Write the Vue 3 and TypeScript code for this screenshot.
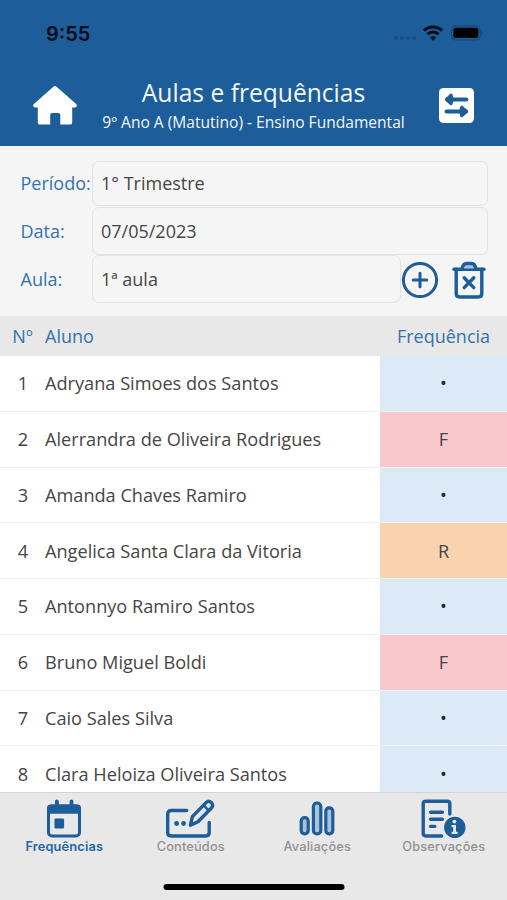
<script setup lang="ts">
type Mark = '•' | 'F' | 'R'

interface Student {
  id: number
  name: string
  mark: Mark
}

const students: Student[] = [
  { id: 1, name: 'Adryana Simoes dos Santos', mark: '•' },
  { id: 2, name: 'Alerrandra de Oliveira Rodrigues', mark: 'F' },
  { id: 3, name: 'Amanda Chaves Ramiro', mark: '•' },
  { id: 4, name: 'Angelica Santa Clara da Vitoria', mark: 'R' },
  { id: 5, name: 'Antonnyo Ramiro Santos', mark: '•' },
  { id: 6, name: 'Bruno Miguel Boldi', mark: 'F' },
  { id: 7, name: 'Caio Sales Silva', mark: '•' },
  { id: 8, name: 'Clara Heloiza Oliveira Santos', mark: '•' },
]

const markClass: Record<Mark, string> = { '•': 'present', F: 'absent', R: 'late' }
</script>

<template>
  <div class="screen">
    <header class="top">
      <div class="status">
        <span class="clock">9:55</span>
        <div class="signals">
          <span class="dots"><i v-for="n in 4" :key="n"></i></span>
          <svg class="wifi" width="20" height="16" viewBox="0 0 20 16">
            <g fill="none" stroke="#050d18" stroke-width="3">
              <path d="M1 5.6a12.9 12.9 0 0 1 18 0" />
              <path d="M4.4 9.3a8 8 0 0 1 11.2 0" />
            </g>
            <path d="M10 15.8l-3-3.2a4.3 4.3 0 0 1 6 0z" fill="#050d18" />
          </svg>
          <svg class="battery" width="32" height="16" viewBox="0 0 32 16">
            <rect x=".6" y=".8" width="28.6" height="14.2" rx="4.3" fill="none" stroke="#164878" stroke-width="1.2" />
            <rect x="2.4" y="2.7" width="25" height="10.4" rx="2.4" fill="#000" />
            <path d="M30.5 5.5q2 2.4 0 4.8z" fill="#123d68" />
          </svg>
        </div>
      </div>
      <div class="nav">
        <svg class="home" width="44" height="39" viewBox="0 0 44 39">
          <path d="M20.4.8a2.4 2.4 0 0 1 3.2 0L43.4 18.3Q44.7 20.9 42.2 21.5H39.2V36.8Q39.2 38.5 37.5 38.5H27.3V29Q27.3 27 25.3 27H19.2Q17.2 27 17.2 29V38.5H6.5Q4.8 38.5 4.8 36.8V21.5H1.8Q-.7 20.9.6 18.3z" fill="#fff" />
        </svg>
        <div class="titles">
          <h1>Aulas e frequências</h1>
          <p>9º Ano A (Matutino) - Ensino Fundamental</p>
        </div>
        <svg class="swap" width="35" height="35" viewBox="0 0 35 35">
          <rect width="35" height="35" rx="4.5" fill="#fff" />
          <g fill="#1d5d99" stroke="#1d5d99" stroke-linecap="round" stroke-linejoin="round">
            <path d="M8 11.4H27.4M7.5 23.5H27" stroke-width="4" fill="none" />
            <path d="M7.8 11.4L12 7.4L13 11.4L12 15.4zM27.4 23.5L22.8 19.4L22 23.5L22.8 27.6z" stroke-width="3.4" />
          </g>
        </svg>
      </div>
    </header>

    <section class="filters">
      <div class="field first"><label>Período:</label><div class="box">1° Trimestre</div></div>
      <div class="field"><label>Data:</label><div class="box">07/05/2023</div></div>
      <div class="field">
        <label>Aula:</label>
        <div class="box short">1ª aula</div>
        <svg class="add" width="38" height="38" viewBox="0 0 38 38" fill="none" stroke="#1d5d99" stroke-width="3" stroke-linecap="round">
          <circle cx="19" cy="19" r="16.6" />
          <path d="M12.2 19H25.8M19 12.2V25.8" />
        </svg>
        <svg class="trash" width="34" height="38" viewBox="0 0 34 38" fill="none" stroke="#1d5d99" stroke-width="3.4" stroke-linecap="round" stroke-linejoin="round">
          <path d="M2 8.2H32" />
          <path d="M4.2 8.2V32.5Q4.2 36 7.7 36H26.3Q29.8 36 29.8 32.5V8.2" />
          <path d="M10.2 7.4Q11.2 2.5 14.4 2.5H19.6Q22.8 2.5 23.8 7.4" fill="#a9c3db" />
          <path d="M12.2 16.8L21.8 26.6M21.8 16.8L12.2 26.6" />
        </svg>
      </div>
    </section>

    <div class="thead"><span class="num">Nº</span><span class="name">Aluno</span><span class="freq">Frequência</span></div>
    <main class="list">
      <div v-for="s in students" :key="s.id" class="row">
        <span class="num">{{ s.id }}</span>
        <span class="name">{{ s.name }}</span>
        <span class="freq" :class="markClass[s.mark]">{{ s.mark }}</span>
      </div>
    </main>

    <footer class="bottom">
      <nav class="tabs">
        <div class="tab active">
          <svg width="36" height="40" viewBox="0 0 36 40">
            <rect x="2.5" y="7" width="31" height="30" rx="3.5" fill="none" stroke="#1d5d99" stroke-width="3" />
            <path d="M1 14.8V9Q1 5.4 4.6 5.4H9V2.5a1.9 1.9 0 0 1 3.8 0V5.4H23.6V2.5a1.9 1.9 0 0 1 3.8 0V5.4H31.4Q35 5.4 35 9V14.8z" fill="#1d5d99" />
            <rect x="8.5" y="19.4" width="9.6" height="10" rx="1.2" fill="#1d5d99" />
          </svg>
          <span>Frequências</span>
        </div>
        <div class="tab">
          <svg width="50" height="40" viewBox="0.8 0 50 40" fill="none" stroke="#1d5d99" stroke-width="3.4" stroke-linecap="round" stroke-linejoin="round">
            <path d="M21.5 11.5H6Q2.5 11.5 2.5 15V33.5Q2.5 37 6 37H40.5Q44 37 44 33.5V23.5" />
            <path d="M25.2 26.2L27.2 17.6L40.8 3.6Q43.4 1 46 3.5Q48.8 6.2 46.2 9L32.8 22.8Z" />
            <path d="M38.2 6.2L43.6 11.6" stroke-width="2.6" />
            <g fill="#1d5d99" stroke="none"><circle cx="11.4" cy="24.5" r="2.4" /><circle cx="18.4" cy="24.5" r="2.4" /><path d="M24.3 27.2L25.4 21.8L29.8 26z" /></g>
          </svg>
          <span>Conteúdos</span>
        </div>
        <div class="tab">
          <svg width="36" height="40" viewBox="0 0 36 40" fill="#a9c3db" stroke="#1d5d99" stroke-width="3.2">
            <rect x="2.2" y="18.7" width="7" height="16.2" rx="3.3" />
            <rect x="14.4" y="4" width="7.4" height="30.9" rx="3.5" />
            <rect x="26.8" y="8.8" width="7" height="26.1" rx="3.3" />
          </svg>
          <span>Avaliações</span>
        </div>
        <div class="tab">
          <svg width="46" height="40" viewBox="0.8 0 46 40" fill="none" stroke="#1d5d99" stroke-width="3.4" stroke-linecap="round" stroke-linejoin="round">
            <path d="M21.5 37H5.5Q3 37 3 34.5V4.8Q3 2.2 5.6 2.2H27Q29.6 2.2 29.6 4.8V15" />
            <path d="M10.4 13.2H22.2M10.4 20.2H22.2M10.4 27.4H14.6" />
            <circle cx="34.6" cy="28.4" r="11.6" fill="#1d5d99" stroke="#e8e8e8" stroke-width="1.8" />
            <g fill="#e9e9e9" stroke="none"><circle cx="34.2" cy="22.6" r="1.9" /><path d="M31.4 26H35.8V32.7H37.4V35H31.4V32.7H33V28.3H31.4z" /></g>
          </svg>
          <span>Observações</span>
        </div>
      </nav>
      <div class="indicator"></div>
    </footer>
  </div>
</template>

<style>
body {
  margin: 0;
  overflow: hidden;
}
</style>

<style scoped>
* {
  box-sizing: border-box;
}
.screen {
  width: 507px;
  height: 900px;
  display: flex;
  flex-direction: column;
  overflow: hidden;
  background: #fff;
  color: #454545;
  font-family: 'Open Sans', sans-serif;
  font-size: 18px;
}
svg {
  display: block;
  flex: none;
}
.top {
  flex: none;
  height: 146px;
  background: #1d5d99;
}
.status {
  height: 66px;
  padding: 0 24px 0 46px;
  display: flex;
  align-items: center;
  justify-content: space-between;
}
.clock {
  color: #020b16;
  font: 600 20px/24px Inter, sans-serif;
  padding-top: 1px;
}
.signals {
  display: flex;
  align-items: center;
}
.dots {
  display: flex;
  gap: 2px;
  padding-top: 10px;
  margin-right: 7px;
}
.dots i {
  width: 4px;
  height: 4px;
  border-radius: 50%;
  background: #194f83;
}
.wifi {
  margin-right: 8px;
}
.nav {
  height: 79px;
  display: grid;
  grid-template-columns: 44px 1fr 35px;
  align-items: center;
  padding: 0 33px;
}
.titles {
  justify-self: center;
  text-align: center;
  color: #f1f7fc;
  white-space: nowrap;
  padding-bottom: 2px;
  margin-left: -9px;
}
h1 {
  margin: 0;
  font-size: 24.6px;
  font-weight: 400;
  line-height: 35px;
}
p {
  margin: 0;
  font-size: 15.57px;
  line-height: 24px;
}
.filters {
  flex: none;
  height: 170px;
  padding: 14.5px 19px 0 20.5px;
  background: #f5f5f5;
}
.field {
  display: flex;
  align-items: center;
  height: 48px;
}
.field.first {
  height: 45px;
  margin-bottom: 1.5px;
}
label {
  flex: none;
  width: 71px;
  color: #3472ae;
  white-space: nowrap;
}
.box {
  flex: 1;
  height: 100%;
  display: flex;
  align-items: center;
  padding-left: 8.5px;
  border: 1px solid #e3e3e3;
  border-radius: 7px;
}
.short {
  flex: none;
  width: 309.5px;
}
.add,
.trash {
  position: relative;
  top: 1px;
}
.trash {
  margin-left: 13px;
}
.thead,
.row {
  flex: none;
  display: grid;
  grid-template-columns: 45px 335px 127px;
  align-items: center;
}
.thead {
  height: 39.5px;
  background: #e8e8e8;
  color: #3472ae;
}
.num,
.freq {
  text-align: center;
}
.row .num {
  padding-left: 1px;
}
.list {
  flex: 1;
  min-height: 0;
  overflow: hidden;
  padding-top: 0.5px;
  font-size: 18.17px;
}
.row {
  height: 55.75px;
  border-bottom: 1px solid #f1f1f1;
}
.row .freq {
  height: 100%;
  display: flex;
  align-items: center;
  justify-content: center;
}
.present {
  background: #dceaf7;
  color: #1c2b3a;
}
.absent {
  background: #f9c8cc;
}
.late {
  background: #f9d3ad;
}
.bottom {
  flex: none;
  height: 108px;
  background: #e8e8e8;
  border-top: 1px solid #d4d4d4;
}
.tabs {
  display: grid;
  grid-template-columns: repeat(4, 1fr);
  height: 91px;
  padding: 6px 0 0 1px;
}
.tab {
  display: flex;
  flex-direction: column;
  align-items: center;
  color: #929292;
  font: 500 12.8px/16px Inter, sans-serif;
  letter-spacing: 0.15px;
}
.active {
  color: #2367a6;
  font-weight: 600;
}
.indicator {
  width: 181px;
  height: 6px;
  margin: 0 auto;
  border-radius: 3px;
  background: #000;
  transform: translateX(0.5px);
}
</style>
